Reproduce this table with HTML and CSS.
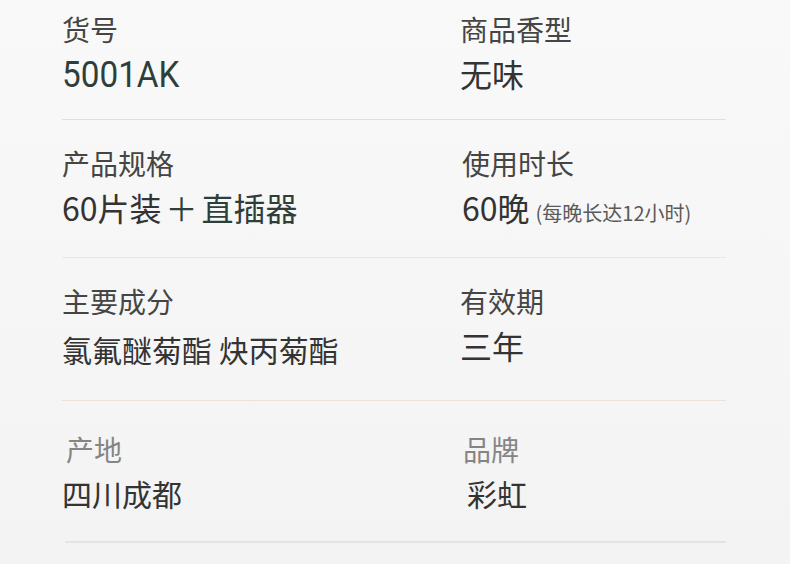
FILE: index.html
```html
<!DOCTYPE html>
<html lang="zh-CN">
<head>
<meta charset="utf-8">
<title>产品参数</title>
<link rel="stylesheet" href="styles.css">
</head>
<body>
<div class="specs">
  <div class="row row-1">
    <div class="cell">
      <div class="label">货号</div>
      <div class="value"><span class="code">5001AK</span></div>
    </div>
    <div class="cell">
      <div class="label">商品香型</div>
      <div class="value">无味</div>
    </div>
  </div>
  <div class="row row-2">
    <div class="cell">
      <div class="label">产品规格</div>
      <div class="value">60片装<span class="green"><span class="plus">＋</span>直插器</span></div>
    </div>
    <div class="cell shift-r">
      <div class="label">使用时长</div>
      <div class="value">60晚<span class="note">(每晚长达12小时)</span></div>
    </div>
  </div>
  <div class="row row-3">
    <div class="cell">
      <div class="label">主要成分</div>
      <div class="value small">氯氟醚菊酯 炔丙菊酯</div>
    </div>
    <div class="cell">
      <div class="label">有效期</div>
      <div class="value">三年</div>
    </div>
  </div>
  <div class="row row-4">
    <div class="cell">
      <div class="label light indent">产地</div>
      <div class="value small">四川成都</div>
    </div>
    <div class="cell">
      <div class="label light">品牌</div>
      <div class="value small indent">彩虹</div>
    </div>
  </div>
</div>
</body>
</html>
```

FILE: styles.css
```css
html, body {
  margin: 0;
  padding: 0;
}
body {
  width: 790px;
  height: 564px;
  overflow: hidden;
  background: linear-gradient(#f9f9f9, #f3f3f3);
  font-family: "Noto Sans CJK SC", "Noto Sans", sans-serif;
  color: #333;
}
.specs {
  margin-left: 62px;
  width: 664px;
}
.row {
  display: grid;
  grid-template-columns: 398px 1fr;
  box-sizing: border-box;
  border-bottom: 1px solid #e6ddd6;
}
.row-1 { height: 120px; padding-top: 11px; }
.row-2 { height: 138px; padding-top: 25px; border-bottom-color: #ebe7e6; }
.row-3 { height: 143px; padding-top: 25px; border-bottom-color: #ede0d4; }
.row-4 {
  height: 142px;
  padding-top: 30px;
  margin-left: 3px;
  border-bottom: 2px solid #e4e4e4;
}
.row-4 .cell:first-child { margin-left: -3px; }
.cell {
  display: flex;
  flex-direction: column;
  gap: 6px;
}
.row-3 .cell:first-child { gap: 10px; }
.label {
  font-size: 28px;
  line-height: 36px;
  color: #454545;
}
.label.light { color: #858585; }
.indent { margin-left: 4px; }
.shift-r { padding-left: 2px; }
.value {
  font-size: 32px;
  line-height: 40px;
  color: #333;
}
.value.small { font-size: 30px; }
.code {
  display: inline-block;
  font-family: Roboto, "Noto Sans", sans-serif;
  font-size: 37px;
  transform: scaleX(0.9);
  transform-origin: left center;
  color: #2e3f3b;
}
.green { color: #2e3f3b; }
.plus {
  display: inline-block;
  margin: 0 4px;
}
.note {
  font-size: 20px;
  color: #5a5a5a;
  margin-left: 6px;
}
```
